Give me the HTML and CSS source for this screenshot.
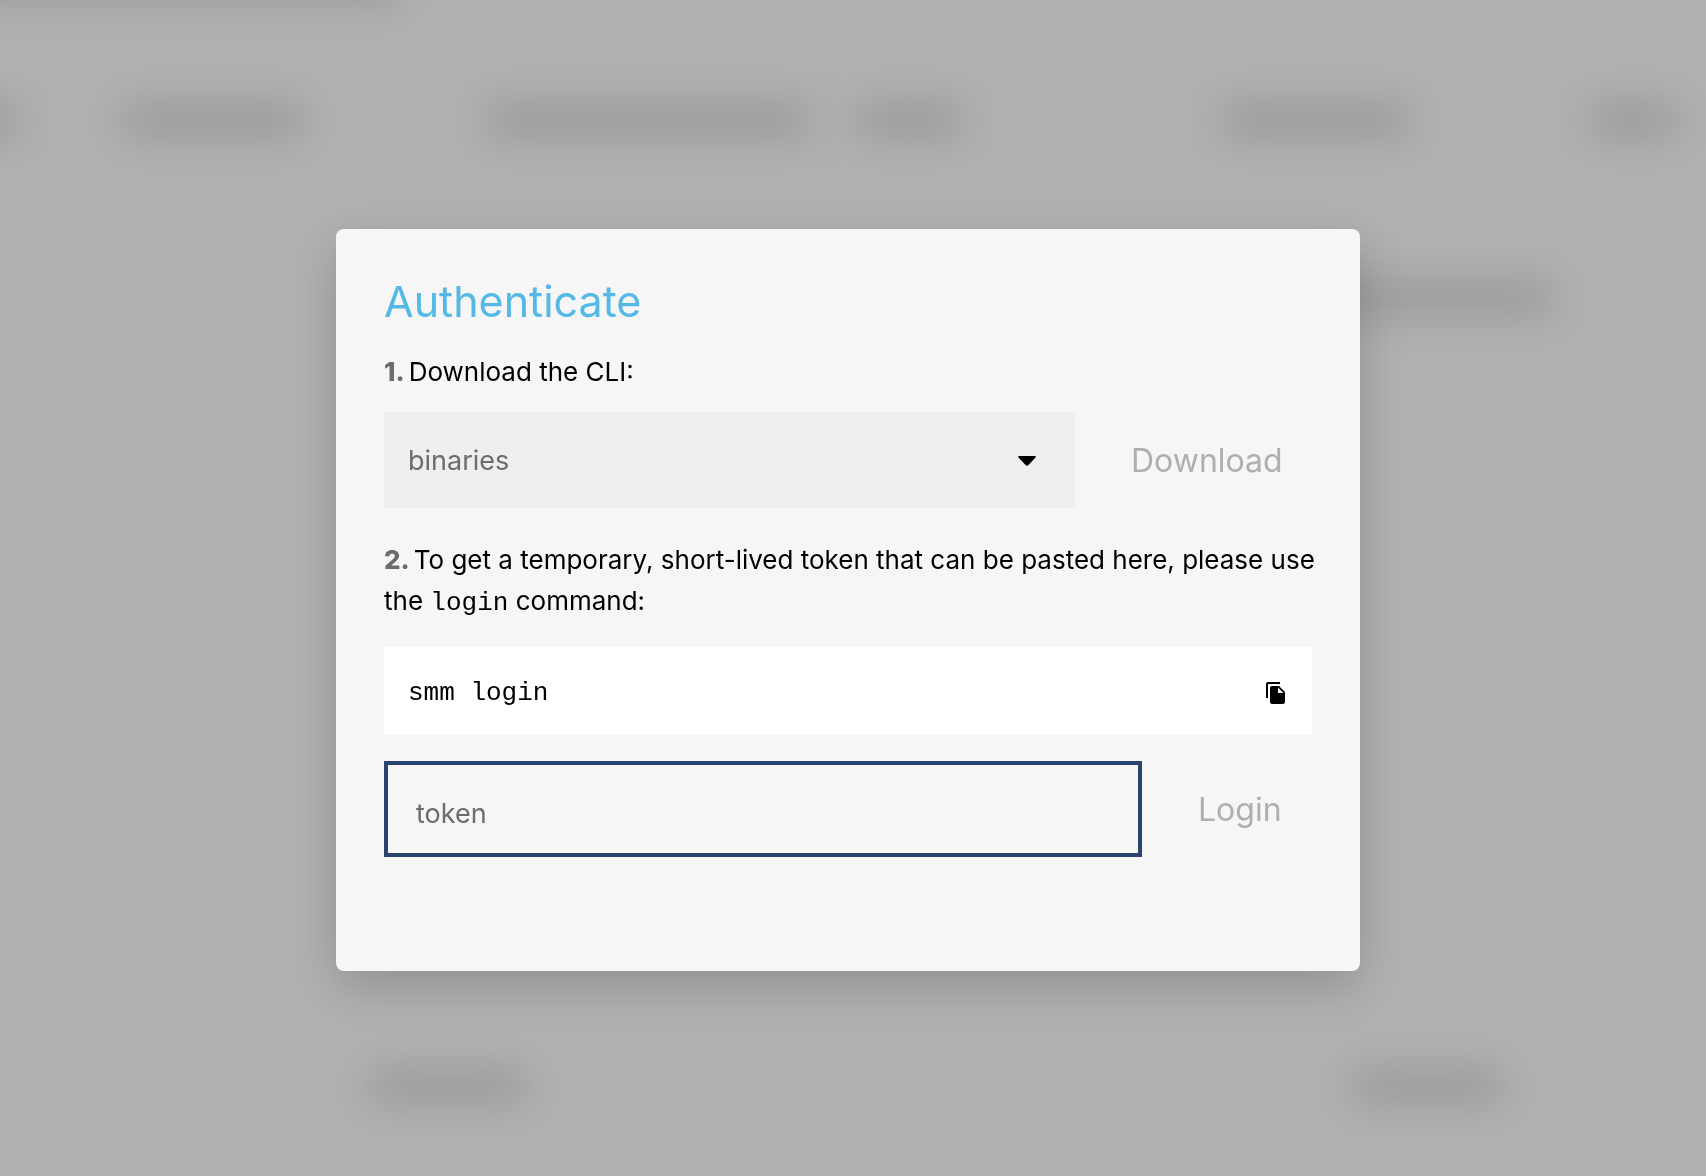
FILE: index.html
```html
<!DOCTYPE html>
<html lang="en">
<head>
<meta charset="utf-8">
<title>Authenticate</title>
<link rel="stylesheet" href="styles.css">
</head>
<body>
<div class="backdrop" aria-hidden="true">
  <span class="blur blur-a"></span>
  <span class="blur blur-b"></span>
  <span class="blur blur-c"></span>
  <span class="blur blur-d"></span>
  <span class="blur blur-e"></span>
  <span class="blur blur-f"></span>
  <span class="blur blur-g"></span>
  <span class="blur blur-h"></span>
  <span class="blur blur-i"></span>
  <span class="blur blur-j"></span>
</div>
<main class="overlay">
  <section class="modal" role="dialog" aria-labelledby="title">
    <h1 class="title" id="title">Authenticate</h1>
    <label class="step" for="binaries"><b class="num">1.</b>Download the CLI:</label>
    <div class="row">
      <div class="select-wrap">
        <select class="select" id="binaries"><option>binaries</option></select>
        <svg class="caret" width="18" height="10" viewBox="0 0 18 10"><path d="M1 0H17Q18.300 .4 17.500 1.500L10.500 9Q9 10.500 7.500 9L.5 1.500Q-.3 .4 1 0Z"/></svg>
      </div>
      <button class="button button-download" type="button" disabled>Download</button>
    </div>
    <label class="step step-token" for="token"><b class="num">2.</b>To get a temporary, short-lived token that can be pasted here, please use the <code class="mono">login</code> command:</label>
    <div class="command">
      <code class="mono">smm login</code>
      <button class="copy" type="button" aria-label="Copy">
        <svg width="24" height="24" viewBox="0 0 24 24"><path d="M16 1H4c-1.100 0-2 .9-2 2v14h2V3h12V1zm-1 4l6 6v10c0 1.100-.9 2-2 2H7.990C6.890 23 6 22.100 6 21V7c0-1.100.89-2 1.990-2h7zm-1 7h5.500L14 6.500V12z"/></svg>
      </button>
    </div>
    <div class="row">
      <input class="input" id="token" type="text" placeholder="token">
      <button class="button button-login" type="button" disabled>Login</button>
    </div>
  </section>
</main>
</body>
</html>
```
FILE: styles.css
```css
* { box-sizing: border-box; }

body {
  margin: 0;
  background: #b1b1b1;
  color: #000;
  font-family: Inter, "Liberation Sans", sans-serif;
}

.backdrop {
  position: fixed;
  inset: 0;
  overflow: hidden;
}

.blur {
  position: absolute;
  top: 103px;
  height: 34px;
  background: #999;
  filter: blur(20px);
}

.blur-a { left: -40px; width: 60px; }
.blur-b { left: 122px; width: 182px; }
.blur-c { left: 486px; width: 324px; }
.blur-d { left: 856px; width: 108px; }
.blur-e { left: 1220px; width: 190px; }
.blur-f { left: 1588px; width: 90px; }
.blur-g { left: -40px; top: -32px; width: 440px; }
.blur-h { left: 1320px; top: 281px; width: 234px; }
.blur-i { left: 370px; top: 1069px; width: 156px; }
.blur-j { left: 1352px; top: 1069px; width: 150px; }

.overlay {
  position: relative;
  display: flex;
  align-items: center;
  justify-content: center;
  min-height: 100vh;
  padding: 24px 10px 0 0;
}

.modal {
  display: flex;
  flex-direction: column;
  width: 100%;
  max-width: 1024px;
  padding: 48px 48px 114px;
  border-radius: 8px;
  background: #f6f6f6;
  box-shadow: 0 16px 48px rgba(0, 0, 0, 0.18);
}

.title {
  margin: 0 0 26px;
  color: #54b9e6;
  font-size: 43px;
  font-weight: 400;
  line-height: 48px;
}

.step {
  margin: 0 -16px 20px 0;
  font-size: 26px;
  line-height: 41px;
}

.step-token {
  margin-top: 31px;
  margin-bottom: 23px;
}

.num {
  margin-right: 4px;
  color: #6c6c6c;
  font-weight: 800;
}

.mono {
  font-family: "Liberation Mono", monospace;
  font-size: 26px;
}

.row {
  display: flex;
  gap: 24px;
}

.select-wrap {
  position: relative;
  flex: 1;
}

.select {
  display: block;
  width: 100%;
  height: 96px;
  padding: 0 72px 0 24px;
  border: 0;
  border-radius: 0;
  appearance: none;
  background: #eee;
  color: #6c6c6c;
  font: 27px Inter, sans-serif;
}

.caret {
  position: absolute;
  top: 44px;
  right: 39px;
  pointer-events: none;
}

.button {
  padding: 0 32px;
  border: 0;
  background: none;
  color: #afafaf;
  font: 32px Inter, sans-serif;
}

.button-download { width: 213px; }
.button-login { width: 146px; }

.command {
  display: flex;
  align-items: center;
  justify-content: space-between;
  height: 88px;
  margin-bottom: 26px;
  padding: 4px 24px 0;
  background: #fff;
}

.copy {
  display: flex;
  padding: 0;
  border: 0;
  background: none;
}

.input {
  flex: 1;
  min-width: 0;
  height: 96px;
  padding: 8px 28px 0;
  border: 4px solid #28446f;
  border-radius: 0;
  background: #f6f6f6;
  color: #000;
  font: 27px Inter, sans-serif;
}

.input::placeholder { color: #6c6c6c; }
```
